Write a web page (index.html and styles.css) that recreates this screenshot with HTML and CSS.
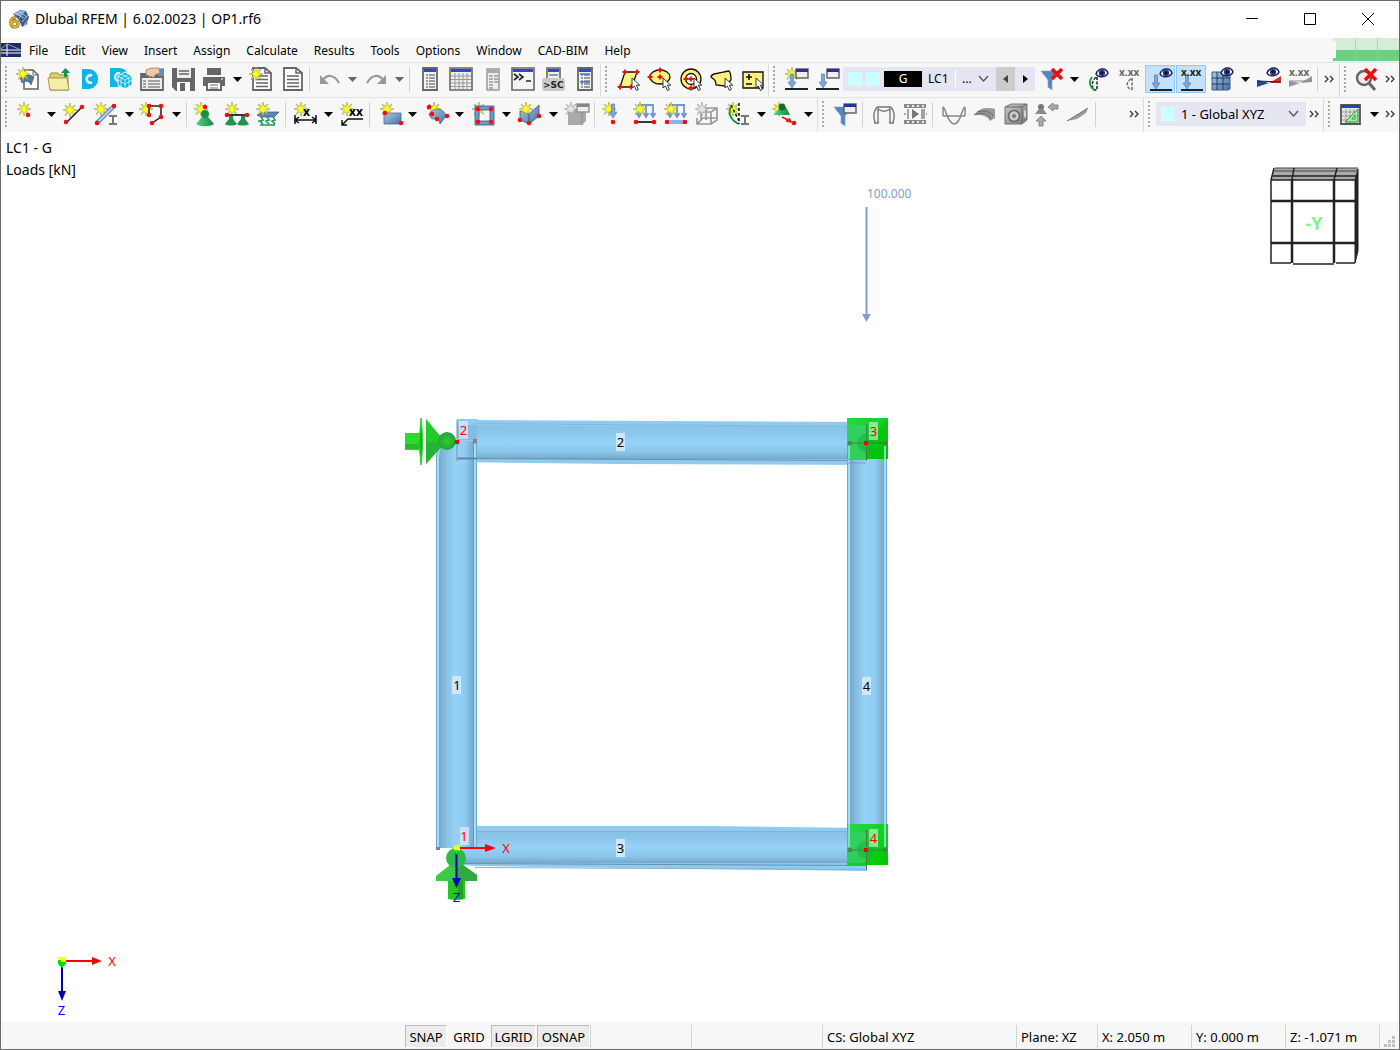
FILE: index.html
```html
<!DOCTYPE html>
<html lang="en">
<head>
<meta charset="utf-8">
<title>Dlubal RFEM | 6.02.0023 | OP1.rf6</title>
<link rel="stylesheet" href="styles.css">
</head>
<body>
<svg class="defs" aria-hidden="true">
  <defs>
    <linearGradient id="blue" x1="0" y1="0" x2="1" y2="1"><stop offset="0" stop-color="#a9c8ea"/><stop offset="1" stop-color="#45729f"/></linearGradient>
    <linearGradient id="green" x1="0" y1="0" x2="1" y2="0"><stop offset="0" stop-color="#56d58a"/><stop offset="1" stop-color="#14853f"/></linearGradient>
    <linearGradient id="grey" x1="0" y1="0" x2="1" y2="1"><stop offset="0" stop-color="#ccc"/><stop offset="1" stop-color="#777"/></linearGradient>
    <linearGradient id="tube-v" x1="0" y1="0" x2="1" y2="0"><stop offset="0" stop-color="#79aece"/><stop offset=".15" stop-color="#86bddf"/><stop offset=".45" stop-color="#95d3f8"/><stop offset=".75" stop-color="#90ccf1"/><stop offset="1" stop-color="#78adcd"/></linearGradient>
    <linearGradient id="tube-h" x1="0" y1="0" x2="0" y2="1"><stop offset="0" stop-color="#88c2e5"/><stop offset=".2" stop-color="#8cc7ec"/><stop offset=".5" stop-color="#95d3f8"/><stop offset=".8" stop-color="#8ac4e8"/><stop offset="1" stop-color="#74a9ca"/></linearGradient>
    <linearGradient id="lime" x1="0" y1="0" x2="1" y2="1"><stop offset="0" stop-color="#26d84a"/><stop offset="1" stop-color="#00c800"/></linearGradient>
    <radialGradient id="ball"><stop offset="0" stop-color="#36c936"/><stop offset="1" stop-color="#1fa53a"/></radialGradient>
    <path id="caret" d="M0 0h9L4.500 5z"/>
    <path id="star" d="M0-7 1.200-2.500 5-5 2.600-1.200 7 0 2.600 1.200 5 5.500 1.200 2.600 0 7-1.200 2.600-5 5.500-2.600 1.200-7 0-2.600-1.200-5-5-1.200-2.500z" fill="#ffff1a" stroke="#99995c" stroke-width=".6"/>
    <path id="star-grey" d="M0-7 1.200-2.500 5-5 2.600-1.200 7 0 2.600 1.200 5 5.500 1.200 2.600 0 7-1.200 2.600-5 5.500-2.600 1.200-7 0-2.600-1.200-5-5-1.200-2.500z" fill="#e4e4e4" stroke="#999" stroke-width=".6"/>
    <circle id="node" r="2.300" fill="#f01010"/>
    <path id="cursor" d="M0 0v10l2.400-2 2 4.500 2-1-2-4.300h3.400z" fill="#fff" stroke="#222" stroke-width=".9"/>
    <path id="plus" d="M-2.500 0h5M0-2.500v5" stroke="#f01010" stroke-width="1.800" fill="none"/>
    <g id="eye"><path d="M-6 1C-4-5 4-6 6 0 4 4.500-4 5-6 1z" fill="#fff" stroke="#222255" stroke-width="1.500"/><circle r="3.200" fill="#2a3a94"/><circle r="1.400" fill="#080820"/></g>
    <g id="mini-window"><path d="M0 0h12v9H0z" fill="#eee" stroke="#666" stroke-width="1.500"/><path d="M0 0h12v3H0z" fill="#26319a"/></g>
    <path id="down" d="M-1.500 0h3v8H4L0 14-4 8h2.500z" fill="#7fa5d8" stroke="#4c74ab" stroke-width=".6"/>
    <g id="support"><path d="M-3 5h6l6 7c-4 3-14 3-18 0z" fill="url(#green)"/><circle cy="2" r="4" fill="#189045"/></g>
    <path id="mini-support" d="M-2 0h4v3l4 5c-2 2-10 2-12 0l4-5z" fill="#1f9250"/>
    <g id="sheet"><path d="M3 1h12l6 5v17H3z" fill="#fff" stroke="#666" stroke-width="1.800"/><path d="M15 1v5h6M6 9h12M6 12.500h12M6 16h12M6 19.500h12" fill="none" stroke="#666" stroke-width="1.500"/></g>
    <g id="panel"><path d="M5 1h14v22H5z" fill="#f2f2f2" stroke="#666" stroke-width="1.800"/><path d="M6 2h12v3H6z" fill="#3543d2"/><path d="M8 8h2m1 0h6M8 11h2m1 0h6M8 14h2m1 0h6M8 17h2m1 0h6M8 20h2m1 0h6" stroke="#444" stroke-width="1.200"/></g>
    <g id="more" fill="none" stroke="#333" stroke-width="1.300"><path d="M0 0l3 3-3 3M5 0l3 3-3 3"/></g>
    <path id="funnel" d="M2 4h18l-7 9v10l-4-3v-7z" fill="#5885bd" stroke="#7ea5d3" stroke-width=".7"/>
    <path id="load-frame" d="M5 3h16M6 3v11m7-11v11m7-11v11M3.500 11l2.500 4 2.500-4m2 0 2.500 4 2.500-4m2 0 2.500 4 2.500-4" fill="none" stroke="#6d97cf" stroke-width="1.800"/>
    <path id="i-beam" d="M0 0h8M4 0v8M0 8h8" fill="none" stroke="#777" stroke-width="2"/>
    <path id="chevron" d="M0 0l4.500 5L9 0" fill="none" stroke="#555" stroke-width="1.300"/>
  </defs>
</svg>

<div class="window">
  <header class="titlebar">
    <svg class="app-icon" viewBox="0 0 20 20"><path d="M4 5 11 1l6 1 3 6-2 7-5 3-3-7z" fill="#3c5f90"/><path d="M4 5l8-4 5 1-7 5z" fill="#8ba9cf"/><path d="M6 4l9 5m-6-7 9 6m-3-5-5 6m9-3-6 7m7-3-5 6" stroke="#c3d4ea" stroke-width=".8"/><path d="M7 9C3 8 1 11 2 15c1 4 7 4 7 0 0-4-5-4-6-1" fill="none" stroke="#8a711c" stroke-width="3.200"/><path d="M7 9C3 8 1 11 2 15c1 4 7 4 7 0 0-4-5-4-6-1" fill="none" stroke="#dcb73d" stroke-width="1.800"/></svg>
    <h1>Dlubal RFEM | 6.02.0023 | OP1.rf6</h1>
    <div class="window-controls">
      <button aria-label="Minimize"><svg viewBox="0 0 12 12"><path d="M0 5.500h12"/></svg></button>
      <button aria-label="Maximize"><svg viewBox="0 0 12 12"><path d="M.5.5h11v11H.5z"/></svg></button>
      <button aria-label="Close"><svg viewBox="0 0 12 12"><path d="M0 0l12 12M12 0 0 12"/></svg></button>
    </div>
  </header>

  <nav class="menubar">
    <svg class="menu-logo" viewBox="0 0 20 14"><path fill="#1f2c66" d="M0 0h20v14H0z"/><path d="M0 7h20M0 10h20M6 1v12" fill="none" stroke="#fff" stroke-width="1"/><path d="M0 6l6-5 12 5" fill="none" stroke="#aeb6d8" stroke-width=".8"/></svg>
    <button>File</button><button>Edit</button><button>View</button><button>Insert</button><button>Assign</button><button>Calculate</button><button>Results</button><button>Tools</button><button>Options</button><button>Window</button><button>CAD-BIM</button><button>Help</button>
    <svg class="monitor" viewBox="0 0 66 24"><path fill="#d3edd8" d="M0 0h66v12H0z"/><path fill="#6fcf80" d="M0 12h66v11H0z"/><path fill="#f7f7f7" d="M0 3h3v17H0z"/><path d="M22.500 0v12M44.500 0v12" stroke="#b4d4bb"/><path d="M22.500 12v11M44.500 12v11" stroke="#84d993"/></svg>
  </nav>

  <div class="toolrow">
    <div class="toolbar" role="toolbar" aria-label="Standard">
      <i class="grip"></i>
      <button class="tool" aria-label="New model"><svg viewBox="0 0 24 24"><path d="M8 3h9l5 5v14H8z" fill="#fff" stroke="#666" stroke-width="1.600"/><path d="M17 3v5h5" fill="none" stroke="#666"/><path d="M4 11c5-4 9-4 14-1l-3 8c-1-4-6-5-9-2z" fill="#4977ad" stroke="#2d557f" stroke-width=".6"/><use href="#star" x="7" y="7"/></svg></button>
      <button class="tool" aria-label="Open"><svg viewBox="0 0 24 24"><path d="M3 8l1-2h7l2 2h8v15H3z" fill="#e0ce72" stroke="#9a8a35"/><path d="M1 11h19l2 12H3z" fill="#f6ecac" stroke="#a89742"/><path d="M17 10V6h-3l4.500-5L23 6h-3v4z" fill="#15924b"/></svg></button>
      <button class="tool" aria-label="Cloud"><svg viewBox="0 0 24 24"><path d="M4 2h7c12 1 12 19 0 20H4z" fill="#0db5e6"/><path d="M14 8.500c-7-2-7 9 0 7" fill="none" stroke="#fff" stroke-width="2.500"/></svg></button>
      <button class="tool" aria-label="Block manager"><svg viewBox="0 0 24 24"><path d="M1 1h9c6 0 9 4 9 9L9 20H1z" fill="#0db5e6"/><path d="M11 6c-6-1-6 8-2 8" fill="none" stroke="#fff" stroke-width="2"/><path d="M16 5l7 4v9l-7 4-7-4V9z" fill="#0db5e6" stroke="#fff"/><path d="M9 9l7 4 7-4m-7 4v9M12 7l8 4v9M20 7l-8 4v9M9 13l7 4 7-4" fill="none" stroke="#c9f1ff" stroke-width=".9"/></svg></button>
      <button class="tool" aria-label="Project manager"><svg viewBox="0 0 24 24"><path d="M1 7h22v16H1z" fill="#eee" stroke="#666" stroke-width="1.800"/><path d="M1 7h22v4H1z" fill="#666"/><path d="M3 14h3m2 0h12M3 17h3m2 0h12M3 20h3m2 0h12" stroke="#555"/><path d="M17 2l7-1v8h-6z" fill="#5d8fc7"/><path d="M6 3l5-2h8l1 5-5 2-1 3-3-2-1 2-2-3-2 1z" fill="#f0c7a4" stroke="#9a6c4a" stroke-width=".7"/></svg></button>
      <button class="tool" aria-label="Save"><svg viewBox="0 0 24 24"><path d="M1 1h23v23H5l-4-4z" fill="#666"/><path d="M6 1h14v10H6z" fill="#eee"/><path d="M8 4h10M8 7h10" stroke="#666" stroke-width="1.500"/><path d="M6 15h13v9H6z" fill="#fff"/><path d="M9 16h5v8H9z" fill="#666"/></svg></button>
      <button class="tool" aria-label="Print"><svg viewBox="0 0 24 24"><path d="M5 1h14v7H5z" fill="#666"/><path d="M1 10h22v9H1z" fill="#666"/><path d="M5 15h14v8H5z" fill="#fff" stroke="#666" stroke-width="2"/><path d="M8 18h8M8 21h8" stroke="#666"/><path d="M19 12h2" stroke="#fff"/></svg></button>
      <button class="drop" aria-label="Print options"><svg viewBox="0 0 9 5"><use href="#caret"/></svg></button>
      <button class="tool" aria-label="New report"><svg viewBox="0 0 24 24"><use href="#sheet" x="1"/><use href="#star" x="7" y="7"/></svg></button>
      <button class="tool" aria-label="Report"><svg viewBox="0 0 24 24"><use href="#sheet" x="1"/></svg></button>
      <i class="sep"></i>
      <button class="tool" aria-label="Undo"><svg viewBox="0 0 24 24"><path d="M5 14c5-7 12-7 17 2" fill="none" stroke="#999" stroke-width="2.200"/><path d="M3 8v9h9z" fill="#999"/></svg></button>
      <button class="drop dim" aria-label="Undo list"><svg viewBox="0 0 9 5"><use href="#caret"/></svg></button>
      <button class="tool" aria-label="Redo"><svg viewBox="0 0 24 24"><path d="M20 14C15 7 8 7 3 16" fill="none" stroke="#999" stroke-width="2.200"/><path d="M22 8v9h-9z" fill="#999"/></svg></button>
      <button class="drop dim" aria-label="Redo list"><svg viewBox="0 0 9 5"><use href="#caret"/></svg></button>
      <i class="sep"></i>
      <button class="tool" aria-label="Navigator"><svg viewBox="0 0 24 24"><use href="#panel" x="1"/></svg></button>
      <button class="tool" aria-label="Tables"><svg viewBox="0 0 24 24"><path d="M2 1h22v22H2z" fill="#eee" stroke="#666" stroke-width="1.600"/><path d="M3 2h20v3H3z" fill="#3543d2"/><path d="M3 9h20M3 12.500h20M3 16h20M3 19.500h20M7 6v16m4-16v16m4-16v16m4-16v16" stroke="#999"/></svg></button>
      <button class="tool" aria-label="Control panel"><svg viewBox="0 0 24 24"><path d="M8 2h12v21H8z" fill="#eee" stroke="#999" stroke-width="1.500"/><path d="M8 3h12v3H8z" fill="#aaa"/><path d="M10 9h4m1 0h4M10 12h4m1 0h4M10 15h4m1 0h4M10 18h4m-4 3h4" stroke="#999" stroke-width="1.400"/></svg></button>
      <button class="tool" aria-label="Console"><svg viewBox="0 0 24 24"><path d="M2 1h22v22H2z" fill="#f4f4f4" stroke="#666" stroke-width="1.600"/><path d="M3 2h20v3H3z" fill="#3543d2"/><path d="M4 7l4 3-4 3m5-6 4 3-4 3m7 1h5" fill="none" stroke="#222" stroke-width="1.600"/></svg></button>
      <button class="tool" aria-label="Scripts"><svg viewBox="0 0 24 24"><path d="M6 1h13v13H6z" fill="#eee" stroke="#666" stroke-width="1.600"/><path d="M7 2h11v3H7z" fill="#3543d2"/><path d="M8 8h9" stroke="#444"/><rect x="1" y="11" width="23" height="13" rx="3" fill="#c9c9c9"/><text x="2" y="21" class="ico-script">&gt;SC</text></svg></button>
      <button class="tool" aria-label="Details panel"><svg viewBox="0 0 24 24"><use href="#panel" x="1"/><path d="M8 7h10M8 15h10" stroke="#3c70d6" stroke-width="1.500"/></svg></button>
    </div>

    <div class="toolbar" role="toolbar" aria-label="Selection">
      <i class="grip"></i>
      <button class="tool" aria-label="Select by rhombus"><svg viewBox="0 0 24 24"><path d="M9 5h12l-5 15H4z" fill="#fbf37c" stroke="#111" stroke-width="1.300"/><use href="#plus" x="9" y="5"/><use href="#plus" x="21" y="5"/><use href="#plus" x="4" y="20"/><use href="#plus" x="15" y="20"/><use href="#cursor" x="16" y="11"/></svg></button>
      <button class="tool" aria-label="Select by ellipse"><svg viewBox="0 0 24 24"><ellipse cx="13" cy="10" rx="10" ry="7" fill="#fbf37c" stroke="#111" stroke-width="1.300"/><use href="#plus" x="13" y="3"/><use href="#plus" x="3" y="10"/><use href="#plus" x="13" y="10"/><use href="#cursor" x="16" y="11"/></svg></button>
      <button class="tool" aria-label="Select by ring"><svg viewBox="0 0 24 24"><circle cx="13" cy="12" r="10" fill="#fbf37c" stroke="#111" stroke-width="1.300"/><circle cx="13" cy="12" r="5.500" fill="#fff" stroke="#111" stroke-width="1.300"/><use href="#plus" x="13" y="12"/><use href="#plus" x="8" y="12"/><use href="#plus" x="13" y="21"/><use href="#cursor" x="16" y="11"/></svg></button>
      <button class="tool" aria-label="Select by polygon"><svg viewBox="0 0 24 24"><path d="M2 10c0-4 9-4 18-6 2 2 2 5 2 9l-6 6-9-1c0-4-1-5-5-8z" fill="#fbf37c" stroke="#111" stroke-width="1.300"/><use href="#cursor" x="16" y="11"/></svg></button>
      <button class="tool" aria-label="Special selection"><svg viewBox="0 0 24 24"><path d="M3 5h20v16H3z" fill="#fbf37c" stroke="#111" stroke-width="1.300"/><path d="M6 10h6M9 7v6m-3 4h6" stroke="#111" stroke-width="1.600"/><use href="#cursor" x="16" y="11"/></svg></button>
    </div>

    <div class="toolbar grow" role="toolbar" aria-label="Load cases">
      <i class="grip"></i>
      <button class="tool" aria-label="New load case"><svg viewBox="0 0 24 24"><path d="M1 22h23" stroke="#222" stroke-width="2"/><use href="#star" x="8" y="7"/><use href="#down" x="8" y="7"/><use href="#mini-window" x="12" y="2"/></svg></button>
      <button class="tool" aria-label="Edit load case"><svg viewBox="0 0 24 24"><path d="M1 22h23" stroke="#222" stroke-width="2"/><use href="#down" x="8" y="7"/><use href="#mini-window" x="12" y="2"/></svg></button>
      <div class="case-box">
        <i class="swatch"></i><i class="swatch"></i><span class="case-type">G</span>
        <select class="case-select" aria-label="Load case"><option>LC1</option></select>
        <span class="pick case-name"><select aria-label="Load case name"><option>...</option></select><svg viewBox="0 0 9 6"><use href="#chevron"/></svg></span>
        <button class="step prev" aria-label="Previous"><svg viewBox="0 0 5 8"><path d="M5 0v8L0 4z"/></svg></button>
        <button class="step" aria-label="Next"><svg viewBox="0 0 5 8"><path d="M0 0v8l5-4z"/></svg></button>
      </div>
      <button class="tool" aria-label="Clear filter"><svg viewBox="0 0 24 24"><use href="#funnel"/><path d="M13 2l10 10m0-10L13 12" stroke="#e81010" stroke-width="3.600"/></svg></button>
      <button class="drop" aria-label="Filter options"><svg viewBox="0 0 9 5"><use href="#caret"/></svg></button>
      <button class="tool" aria-label="Show deformation"><svg viewBox="0 0 24 24"><path d="M11 10v13H8c-3-4-2-9 2-13" fill="none" stroke="#222" stroke-width="1.500" stroke-dasharray="3 1.500"/><path d="M6 10c-4 5-2 11 3 13" fill="none" stroke="#1d9c4c" stroke-width="1.800"/><use href="#eye" x="16" y="6"/></svg></button>
      <button class="tool" aria-label="Deformation values"><svg viewBox="0 0 24 24"><text x="2" y="9" class="ico-values dim-text">x.xx</text><path d="M15 11v12M14 12c-5 3-5 8 0 11" fill="none" stroke="#666" stroke-width="1.400" stroke-dasharray="3 1.500"/></svg></button>
      <button class="tool on" aria-label="Show loads" aria-pressed="true"><svg viewBox="0 0 24 24"><path d="M2 23h22" stroke="#222" stroke-width="2"/><use href="#down" x="8" y="8"/><use href="#eye" x="18" y="6"/></svg></button>
      <button class="tool on" aria-label="Load values" aria-pressed="true"><svg viewBox="0 0 24 24"><path d="M2 23h22" stroke="#222" stroke-width="2"/><use href="#down" x="8" y="8"/><text x="2" y="9" class="ico-values">x.xx</text></svg></button>
      <button class="tool" aria-label="Show results"><svg viewBox="0 0 24 24"><path d="M2 5h18v17l-2 1H2z" fill="url(#blue)" stroke="#355d88"/><path d="M7 5v18m6-18v18M2 11h18M2 17h18" stroke="#213d63"/><use href="#eye" x="17" y="5"/></svg></button>
      <button class="drop" aria-label="Results options"><svg viewBox="0 0 9 5"><use href="#caret"/></svg></button>
      <button class="tool" aria-label="Show diagrams"><svg viewBox="0 0 24 24"><path d="M0 13v7l12-4z" fill="#26469b"/><path d="M12 16l12-7v7z" fill="#cf3422"/><path d="M0 14l24 1" stroke="#222"/><use href="#eye" x="16" y="5"/></svg></button>
      <button class="tool" aria-label="Diagram values"><svg viewBox="0 0 24 24"><path d="M1 14v6l11-4 12-7v6l-12 1z" fill="#999"/><path d="M1 14h23" stroke="#888"/><text x="1" y="9" class="ico-values dim-text">x.xx</text></svg></button>
      <i class="sep"></i>
      <button class="drop" aria-label="More"><svg class="more" viewBox="0 0 9 7"><use href="#more"/></svg></button>
    </div>

    <div class="toolbar" role="toolbar" aria-label="View">
      <i class="grip"></i>
      <button class="tool" aria-label="Cancel zoom"><svg viewBox="0 0 24 24"><circle cx="9" cy="11" r="7" fill="#eee" stroke="#666" stroke-width="2.500"/><path d="M14 16l6 7" stroke="#666" stroke-width="3"/><path d="M10 2l11 11m0-11L10 13" stroke="#e81010" stroke-width="3.600"/></svg></button>
      <button class="drop" aria-label="More"><svg class="more" viewBox="0 0 9 7"><use href="#more"/></svg></button>
    </div>
  </div>

  <div class="toolrow">
    <div class="toolbar" role="toolbar" aria-label="Insert">
      <i class="grip"></i>
      <button class="tool" aria-label="New node"><svg viewBox="0 0 24 24"><use href="#star" x="8" y="7"/><use href="#node" x="12" y="13"/></svg></button>
      <button class="drop" aria-label="Node options"><svg viewBox="0 0 9 5"><use href="#caret"/></svg></button>
      <button class="tool" aria-label="New line"><svg viewBox="0 0 24 24"><use href="#star" x="7" y="8"/><path d="M4 20 19 5" stroke="#222" stroke-width="1.600"/><use href="#node" x="3" y="20"/><use href="#node" x="19" y="5"/></svg></button>
      <button class="tool" aria-label="New member"><svg viewBox="0 0 24 24"><use href="#star" x="7" y="7"/><path d="M3 21 20 4" stroke="#4c75ad" stroke-width="4"/><path d="M3 21 20 4" stroke="#b4cdee" stroke-width="2.400"/><use href="#node" x="3" y="21"/><use href="#node" x="20" y="4"/><use href="#i-beam" x="15" y="14"/></svg></button>
      <button class="drop" aria-label="Member options"><svg viewBox="0 0 9 5"><use href="#caret"/></svg></button>
      <button class="tool" aria-label="New polyline"><svg viewBox="0 0 24 24"><use href="#star" x="5" y="7"/><path d="M8 13V4h12v11l-9 6" fill="none" stroke="#222" stroke-width="1.500"/><use href="#node" x="8" y="13"/><use href="#node" x="8" y="4"/><use href="#node" x="20" y="4"/><use href="#node" x="20" y="15"/><use href="#node" x="11" y="21"/></svg></button>
      <button class="drop" aria-label="Polyline options"><svg viewBox="0 0 9 5"><use href="#caret"/></svg></button>
      <i class="sep"></i>
      <button class="tool" aria-label="Nodal support"><svg viewBox="0 0 24 24"><use href="#star" x="7" y="7"/><use href="#node" x="11" y="5"/><use href="#support" x="11" y="10"/></svg></button>
      <button class="tool" aria-label="Line support"><svg viewBox="0 0 24 24"><use href="#star" x="7" y="7"/><path d="M2 13h20" stroke="#222" stroke-width="1.800"/><use href="#mini-support" x="6" y="14"/><use href="#mini-support" x="18" y="14"/><use href="#node" x="2" y="13"/><use href="#node" x="22" y="13"/></svg></button>
      <button class="tool" aria-label="Surface support"><svg viewBox="0 0 24 24"><path d="M1 13l6-3h16l-5 5H5z" fill="#5b87bd" stroke="#35577f" stroke-width=".7"/><path d="M5 15l2 3-3 1 3 3m4-7 2 3-3 1 3 3m4-7 2 3-3 1 3 3M2 19h4m-2 4h15" fill="none" stroke="#25975a" stroke-width="1.600"/><use href="#star" x="7" y="7"/></svg></button>
      <i class="sep"></i>
      <button class="tool" aria-label="Dimension"><svg viewBox="0 0 24 24"><use href="#star" x="8" y="7"/><path d="M2 13v9M23 13v9M3 18h19M6 15l-4 3 4 3m13-6 4 3-4 3" fill="none" stroke="#111" stroke-width="1.500"/><text x="10" y="14" class="ico-dim">x</text></svg></button>
      <button class="drop" aria-label="Dimension options"><svg viewBox="0 0 9 5"><use href="#caret"/></svg></button>
      <button class="tool" aria-label="Comment"><svg viewBox="0 0 24 24"><use href="#star" x="7" y="7"/><text x="9" y="14" class="ico-dim">xx</text><path d="M23 17H8l-6 6m0-5v5h5" fill="none" stroke="#111" stroke-width="1.500"/></svg></button>
      <i class="sep"></i>
      <button class="tool" aria-label="New surface"><svg viewBox="0 0 24 24"><path d="M7 11h17v11H7z" fill="url(#blue)" stroke="#476d98" stroke-width=".8"/><use href="#star" x="10" y="7"/><use href="#node" x="8" y="11"/><use href="#node" x="24" y="21"/></svg></button>
      <button class="drop" aria-label="Surface options"><svg viewBox="0 0 9 5"><use href="#caret"/></svg></button>
      <button class="tool" aria-label="Curved surface"><svg viewBox="0 0 24 24"><use href="#star" x="10" y="7"/><path d="M5 13C9 4 20 6 22 14l-6 8c0-3-3-6-8-5z" fill="url(#blue)" stroke="#476d98" stroke-width=".8"/><use href="#node" x="5" y="5"/><use href="#node" x="8" y="12"/><use href="#node" x="23" y="14"/><use href="#node" x="13" y="17"/></svg></button>
      <button class="drop" aria-label="Curved surface options"><svg viewBox="0 0 9 5"><use href="#caret"/></svg></button>
      <button class="tool" aria-label="New opening"><svg viewBox="0 0 24 24"><use href="#star" x="8" y="7"/><path d="M4 4h19v19H4zm4 4v11h11V8z" fill="#6e9bd0" stroke="#35577f" fill-rule="evenodd" stroke-width=".8"/><use href="#node" x="7" y="7"/><use href="#node" x="20" y="7"/><use href="#node" x="7" y="20"/><use href="#node" x="20" y="20"/></svg></button>
      <button class="drop" aria-label="Opening options"><svg viewBox="0 0 9 5"><use href="#caret"/></svg></button>
      <button class="tool" aria-label="New solid"><svg viewBox="0 0 24 24"><path d="M2 9l9 3 10-9v11l-10 8-9-4z" fill="url(#blue)" stroke="#35577f" stroke-width=".8"/><path d="M11 12v9" stroke="#35577f"/><use href="#star" x="8" y="7"/><use href="#node" x="2" y="18"/><use href="#node" x="11" y="21"/><use href="#node" x="21" y="14"/></svg></button>
      <button class="drop" aria-label="Solid options"><svg viewBox="0 0 9 5"><use href="#caret"/></svg></button>
      <button class="tool" aria-label="Block"><svg viewBox="0 0 24 24"><path d="M3 10l4-3h14v12l-4 4H3z" fill="#aaa"/><path d="M3 10h14v13" fill="none" stroke="#888"/><use href="#star-grey" x="6" y="7"/><path d="M12 2h12v8H12z" fill="#eee" stroke="#999" stroke-width="1.500"/><path d="M12 2h12v3H12z" fill="#888"/></svg></button>
      <i class="sep"></i>
      <button class="tool" aria-label="Nodal load"><svg viewBox="0 0 24 24"><use href="#star" x="7" y="7"/><use href="#down" x="11" y="2"/><use href="#node" x="11" y="20"/></svg></button>
      <button class="tool" aria-label="Line load"><svg viewBox="0 0 24 24"><use href="#load-frame"/><use href="#star" x="7" y="7"/><path d="M3 20h18" stroke="#222" stroke-width="1.800"/><use href="#node" x="3" y="20"/><use href="#node" x="21" y="20"/></svg></button>
      <button class="tool" aria-label="Member load"><svg viewBox="0 0 24 24"><use href="#load-frame"/><use href="#star" x="7" y="7"/><path d="M3 20h18" stroke="#8db1e3" stroke-width="4"/><use href="#node" x="3" y="20"/><use href="#node" x="21" y="20"/></svg></button>
      <button class="tool" aria-label="Surface load"><svg viewBox="0 0 24 24"><path d="M6 6h16v12l-6 4H2v-6M6 10h10l6-4M16 10v12M6 6v12m5-12v12M2 22l6-6h14" fill="none" stroke="#999" stroke-width="1.700"/><use href="#star-grey" x="7" y="7"/></svg></button>
      <button class="tool" aria-label="Imperfection"><svg viewBox="0 0 24 24"><use href="#star" x="7" y="7"/><path d="M5 5c-4 7 1 14 8 17" fill="none" stroke="#179447" stroke-width="1.800"/><path d="M13 1v21M5 3l8 16" fill="none" stroke="#111" stroke-width="1.500" stroke-dasharray="3 2"/><use href="#i-beam" x="15" y="14"/></svg></button>
      <button class="drop" aria-label="Imperfection options"><svg viewBox="0 0 9 5"><use href="#caret"/></svg></button>
      <button class="tool" aria-label="Support displacement"><svg viewBox="0 0 24 24"><use href="#star" x="6" y="7"/><path d="M7 5h6l4 8H1z" fill="url(#green)"/><circle cx="9" cy="5" r="3.500" fill="#126b37"/><path d="M9 15l8 4m-4 0 5 1-2-4" fill="none" stroke="#e01818" stroke-width="1.600"/><use href="#node" x="21" y="21"/></svg></button>
      <button class="drop" aria-label="Displacement options"><svg viewBox="0 0 9 5"><use href="#caret"/></svg></button>
    </div>

    <div class="toolbar grow results" role="toolbar" aria-label="Results">
      <i class="grip"></i>
      <button class="tool" aria-label="Result filter"><svg viewBox="0 0 24 24"><use href="#funnel" x="-1" y="1"/><use href="#mini-window" x="11" y="2"/></svg></button>
      <i class="sep"></i>
      <button class="tool" aria-label="Deformations"><svg viewBox="0 0 24 24"><path d="M6 6v15m12-15v15M5 5h14M6 7c4 3 8 3 12 0M5 5c-4 5-4 10-2 16M19 5c4 5 4 10 2 16M2 21h5m10 0h5" fill="none" stroke="#777" stroke-width="1.400"/></svg></button>
      <button class="tool" aria-label="Animation"><svg viewBox="0 0 24 24"><path d="M1 2h22v4H1zm0 16h22v4H1z" fill="#888"/><path d="M4 4h2m3 0h2m3 0h2m3 0h2M4 20h2m3 0h2m3 0h2m3 0h2" stroke="#eee" stroke-width="2"/><path d="M5 7v10m14-10v10M1 12h2m18-5v10m2-5h1" stroke="#888" stroke-width="1.500"/><path d="M9 7v10l7-5z" fill="#777"/></svg></button>
      <i class="sep"></i>
      <button class="tool" aria-label="Members"><svg viewBox="0 0 24 24"><path d="M1 5v9m22-9v9M1 14h22M1 5c2 0 3 9 7 14 3 4 6 4 9-1 3-6 4-13 6-13" fill="none" stroke="#888" stroke-width="1.500"/></svg></button>
      <button class="tool" aria-label="Surfaces"><svg viewBox="0 0 24 24"><path d="M1 13C7 5 15 5 22 7v9l-5 3C14 13 8 13 1 13z" fill="#999"/><path d="M1 13c8-3 14-2 17 4M4 10c7-2 13-1 16 4" fill="none" stroke="#666"/></svg></button>
      <button class="tool" aria-label="Solids"><svg viewBox="0 0 24 24"><path d="M1 5l6-3h16v16l-5 4H1z" fill="url(#grey)" stroke="#777"/><path d="M1 5h17l5-3M18 5v17" fill="none" stroke="#666"/><circle cx="10" cy="14" r="5.500" fill="#ccc" stroke="#666" stroke-width="1.500"/><circle cx="10" cy="14" r="2" fill="#777"/><ellipse cx="21" cy="12" rx="1" ry="4" fill="#ddd"/></svg></button>
      <button class="tool" aria-label="Reactions"><svg viewBox="0 0 24 24"><circle cx="6" cy="5" r="3" fill="#777"/><path d="M4 7h4l4 5H0z" fill="#888"/><path d="M13 5l5-4v2h5v4h-5v2zM6 14l5 5H8v5H4v-5H1z" fill="#aaa" stroke="#777" stroke-width=".8"/></svg></button>
      <button class="tool" aria-label="Result sections"><svg viewBox="0 0 24 24"><path d="M1 19 22 6l-2 5-9 6z" fill="#999"/><path d="M1 19 22 6" stroke="#777"/></svg></button>
      <i class="sep"></i>
      <button class="drop last" aria-label="More"><svg class="more" viewBox="0 0 9 7"><use href="#more"/></svg></button>
    </div>

    <div class="toolbar" role="toolbar" aria-label="Coordinate systems">
      <i class="grip"></i>
      <div class="cs-box">
        <i class="swatch"></i>
        <span class="pick"><select aria-label="Coordinate system"><option>1 - Global XYZ</option></select><svg viewBox="0 0 9 6"><use href="#chevron"/></svg></span>
      </div>
      <button class="drop" aria-label="More"><svg class="more" viewBox="0 0 9 7"><use href="#more"/></svg></button>
    </div>

    <div class="toolbar" role="toolbar" aria-label="Work plane">
      <i class="grip"></i>
      <button class="tool" aria-label="Work plane"><svg viewBox="0 0 24 24"><path d="M2 3h19v19H2z" fill="#e8e8e8" stroke="#555" stroke-width="1.800"/><path d="M2 3h19v3H2z" fill="#2944a3"/><path d="M3 10h17M3 14h17M3 18h17M7 7v14m4-14v14m4-14v14" stroke="#999"/><path d="M6 20 19 7v13z" fill="#a4eaa0" stroke="#2c9a3c"/><path d="M13 17l3-4v4z" fill="#fff" stroke="#2c9a3c"/></svg></button>
      <button class="drop" aria-label="Work plane options"><svg viewBox="0 0 9 5"><use href="#caret"/></svg></button>
      <button class="drop" aria-label="More"><svg class="more" viewBox="0 0 9 7"><use href="#more"/></svg></button>
    </div>
  </div>

  <main class="viewport">
    <p class="legend">LC1 - G<br>Loads [kN]</p>

    <svg class="model" viewBox="1 132 1398 890" role="img" aria-label="Frame model with nodal load">
      <!-- nodal load -->
      <path d="M866.500 207v108" stroke="#829dc8" stroke-width="2"/><path d="M862 314h9l-4.500 8z" fill="#829dc8"/>
      <text x="867" y="198" class="load">100.000</text>

      <!-- member 2 -->
      <path d="M457 419l23 1 387 2v43l-250-1-160-2z" fill="#8fcbf0"/>
      <path d="M457 426h410v33H457z" fill="url(#tube-h)"/>
      <path d="M457 423.500l410 3" stroke="#7dbbe0" fill="none"/><path d="M457 458.500l410 2" stroke="#6590ab" fill="none"/>
      <!-- member 3 -->
      <path d="M457 826l250 0 160 2v43l-80-1-310-4-20-1z" fill="#8fcbf0"/>
      <path d="M457 832h410v31H457z" fill="url(#tube-h)"/>
      <path d="M457 831.500h410" stroke="#78b7dc"/><path d="M457 863.500l410 2" stroke="#6590ab"/><path d="M475 867.500l390 2" stroke="#80b6d5"/>
      <!-- member 1 -->
      <path d="M436 441h41v407h-41z" fill="#91cdf2"/><path d="M440 441h33v407h-33z" fill="url(#tube-v)"/>
      <path d="M436.500 455v393M439.500 455v393M476.500 441v407" stroke="#6fa9cc"/><path d="M473.500 441v407" stroke="#5f9dc5"/>
      <path d="M438 455v393M475 441v407" stroke="#a5dcfb" stroke-width="2"/>
      <path d="M457 420h20v20h-20z" fill="#84bce0"/><path d="M457 419h20v6h-20z" fill="#8fcbf0"/><path d="M457 458.500h20" stroke="#5d88a6" stroke-width="2"/>
      <!-- fixed supports at nodes 3 and 4 -->
      <path d="M847 418h41v41h-41z" fill="url(#lime)"/><path d="M847 425h19v34h-19z" fill="#3ccf72" opacity=".7"/><path d="M866 443l22-25v41h-22z" fill="#00b900" opacity=".4"/>
      <path d="M847 824h41v41h-41z" fill="url(#lime)"/><path d="M847 832h19v31h-19z" fill="#3ccf72" opacity=".7"/>
      <!-- member 4 -->
      <path d="M847 459h40v365h-40z" fill="#91cdf2"/><path d="M851 459h32v365h-32z" fill="url(#tube-v)"/>
      <path d="M847.500 459v365M850.500 459v365M886.500 459v365M883.500 459v365" stroke="#73add0"/>
      <path d="M849 459v365M885 459v365" stroke="#a5dcfb" stroke-width="2"/>
      <path d="M847 459.500h20M847 463h19" stroke="#6f9fbd"/>
      <path d="M473 444v-5h4v4M436 847h4v3h-4z" fill="#8a7e91"/>
      <path d="M457 420v41" stroke="#7195ad"/>
      <path d="M847 443h40M866.500 424v37M847 850h40M866.500 830v40" stroke="#50634b" opacity=".8"/>
      <circle cx="866" cy="443" r="9" fill="#17ae38" opacity=".5"/><circle cx="866" cy="850" r="9" fill="#17ae38" opacity=".5"/>
      <path d="M849 446v13M885 446v13M849 824v23M885 824v23" stroke="#7ce0c0" stroke-width="2"/>
      <path d="M848 441h4v4h-4zM883 441h4v4h-4zM848 848h4v4h-4zM883 848h4v4h-4z" fill="#50804b" opacity=".8"/>

      <!-- support at node 2 -->
      <path d="M405 433h17v17h-17z" fill="#2cd92c"/><path d="M405 444h17v5h-17z" fill="#25bd25"/>
      <path d="M421 418c2 14 2 32 0 47l-2-22z" fill="#18b318" stroke="#27d527"/>
      <path d="M426 419l16 19v8l-16 18z" fill="#22ca2a"/><path d="M426 442h16v4l-16 18z" fill="#23b635"/><circle cx="447" cy="441" r="9" fill="url(#ball)"/>
      <!-- support at node 1 -->
      <path d="M448 875h17v24q-8 2-17 0z" fill="#26c526"/><path d="M458 875h5v24h-5z" fill="#1aa41a"/>
      <path d="M436 881v-5l14-11h13l14 10v6z" fill="#3cca42"/><path d="M457 865h6l14 10v6h-20z" fill="#32a93f"/>
      <circle cx="456" cy="858" r="10" fill="#31b84a"/>

      <g fill="#fff" opacity=".5"><path d="M459 421h9v18h-9zM869 422h9v18h-9zM460 827h9v18h-9zM869 829h9v18h-9z"/></g>
      <g fill="#cde8fa"><path d="M616 433h9v18h-9zM616 839h9v18h-9zM452 676h9v18h-9zM862 677h9v18h-9z"/></g>
      <g class="node-no"><text x="463.500" y="435">2</text><text x="873.500" y="436">3</text><text x="464" y="841">1</text><text x="873.500" y="843">4</text></g>
      <g class="member-no"><text x="620.500" y="447">2</text><text x="620.500" y="853">3</text><text x="457" y="690">1</text><text x="866.500" y="691">4</text></g>
      <path d="M455 440h4v4h-4zM864 441h4v4h-4zM864 848h4v4h-4z" fill="#f00"/>

      <!-- origin axes -->
      <path d="M457 848h31" stroke="#f00" stroke-width="2"/><path d="M485 844l11 4-11 4z" fill="#f00"/>
      <path d="M456.500 850v31" stroke="#00b" stroke-width="2"/><path d="M452 878h9l-4.500 10z" fill="#00b"/>
      <path d="M454 845h6v6h-6z" fill="#ff0"/><path d="M454 850h5l-2.500 5z" fill="#0e0"/>
      <text x="506" y="853" class="axis-x">X</text><text x="456.500" y="902" class="axis-z">Z</text>
    </svg>

    <svg class="cube" viewBox="0 0 90 100" role="img" aria-label="View cube">
      <path d="M5 1h83l-3 12H1z" fill="#aaa"/><path d="M1 13h84v83H1z" fill="#fff"/>
      <path d="M88 2v82l-3 12V13z" fill="#222" stroke="#222"/>
      <path d="M5 1h83M4 4h84" fill="none" stroke="#444" stroke-width="1"/>
      <path d="M3 9h83M1 13h84M4 1 1 13v83h20m2 1h41m2-1h19M24 1l-2 12M67 1l-3 12" fill="none" stroke="#222" stroke-width="1.500"/>
      <path d="M22 12v84M64 12v84M1 34h84M1 76h84" fill="none" stroke="#222" stroke-width="2.500"/>
      <text x="44" y="63" class="cube-face">-Y</text>
    </svg>

    <svg class="triad" viewBox="0 0 70 64" role="img" aria-label="Axis directions">
      <path d="M10 8h31" stroke="#f00" stroke-width="2"/><path d="M40 4l10 4-10 4z" fill="#f00"/>
      <path d="M10 10v30" stroke="#00b" stroke-width="2"/><path d="M6 38h8l-4 10z" fill="#00b"/>
      <path d="M6 4h8v6H6z" fill="#ff0"/><path d="M6 7h8v4l-4 4-4-4z" fill="#0d0"/><path d="M8 4h6v5H9z" fill="#ff0"/>
      <text x="60" y="13" class="axis-x">X</text><text x="9.500" y="62" class="axis-z">Z</text>
    </svg>
  </main>

  <footer class="statusbar">
    <div class="toggles">
      <button class="snap" aria-pressed="true">SNAP</button><button class="grid" aria-pressed="false">GRID</button><button class="lgrid" aria-pressed="true">LGRID</button><button class="osnap" aria-pressed="true">OSNAP</button>
    </div>
    <span class="cell w-message"></span>
    <span class="cell w-progress"></span>
    <span class="cell w-system">CS: Global XYZ</span>
    <span class="cell w-plane">Plane: XZ</span>
    <span class="cell w-coord">X: 2.050 m</span>
    <span class="cell w-coord">Y: 0.000 m</span>
    <span class="cell w-coord">Z: -1.071 m</span>
    <span class="cell w-grip"><svg viewBox="0 0 12 12"><path d="M8 0h3v3H8zM4 4h3v3H4zM8 4h3v3H8zM0 8h3v3H0zM4 8h3v3H4zM8 8h3v3H8z" fill="#c0c0c0"/></svg></span>
  </footer>
</div>
</body>
</html>
```
FILE: styles.css
```css
* { box-sizing: border-box; }
body { margin: 0; font-family: "Noto Sans", "Open Sans", sans-serif; font-size: 12px; line-height: 16px; color: #000; background: #fff; }
button, select { font: inherit; color: inherit; border: 0; margin: 0; padding: 0; background: none; border-radius: 0; }
select { appearance: none; }
svg { display: block; overflow: visible; }
.defs { position: absolute; width: 0; height: 0; }

.window { display: flex; flex-direction: column; min-height: 100vh; border: 1px solid #6b6b6b; }

.titlebar { display: flex; align-items: center; height: 37px; padding: 0 2px 2px 8px; background: #fff; }
.app-icon { width: 20px; height: 20px; }
.titlebar h1 { flex: 1; margin: 0 0 0 6px; font-size: 14px; line-height: 20px; font-weight: 400; }
.window-controls { display: flex; }
.window-controls button { display: grid; place-items: center; width: 58px; height: 34px; }
.window-controls svg { width: 12px; height: 12px; fill: none; stroke: #000; }

.menubar { display: flex; align-items: center; height: 24px; background: #f7f7f7; }
.menu-logo { width: 20px; height: 14px; }
.menubar button { padding: 2px 8px 0; }
.monitor { width: 66px; height: 24px; margin-left: auto; }

.toolrow { display: flex; height: 35px; background: #f7f7f7; border-top: 1px solid #e3e3e3; }
.toolbar { display: flex; align-items: center; gap: 1px; padding: 0 1px 2px 0; border-left: 1px solid #dcdcdc; }
.toolbar:first-child { border-left: 0; }
.grow { flex: 1; }
.grip { width: 11px; height: 26px; background: radial-gradient(circle at 5px 1px, #aaa 1px, transparent 1px) 0 0 / 11px 4px; }
.sep { width: 5px; height: 25px; background: linear-gradient(#d2d2d2, #d2d2d2) 1px 0 / 1px 100% no-repeat; }
.results .sep { width: 7px; }
.tool { display: grid; place-items: center; width: 30px; height: 28px; }
.tool svg { width: 24px; height: 24px; }
.tool.on { background: #c5e1f8; border: 1px solid #90c8f6; }
.drop { display: grid; place-items: center; width: 15px; height: 28px; }
.drop svg { width: 9px; height: 5px; }
.drop .more { width: 9px; height: 7px; }
.dim { fill: #666; }
.last { margin-left: auto; }

.swatch { width: 14px; height: 14px; background: #ccffff; }
.case-box, .cs-box { display: flex; align-items: center; height: 24px; background: #e6e6f2; }
.case-box { width: 192px; padding-left: 5px; gap: 4px; }
.case-type { width: 38px; height: 16px; background: #000; color: #fff; text-align: center; }
.case-select { flex: 1; padding-left: 2px; height: 18px; border-right: 1px solid #fff; }
.pick { display: grid; align-items: center; grid-template-columns: 1fr 17px; }
.pick select { grid-area: 1 / 1 / 2 / 3; height: 24px; }
.pick svg { grid-area: 1 / 2; width: 9px; height: 6px; pointer-events: none; }
.case-name { width: 32px; }
.case-name svg { margin-left: 4px; }
.case-name select { padding-left: 2px; }
.step { display: grid; place-items: center; width: 20px; height: 24px; margin-left: -4px; }
.step svg { width: 5px; height: 8px; }
.step.prev { margin-left: 0; width: 19px; background: #ccc; fill: #444; }
.cs-box { width: 150px; padding-left: 5px; font-size: 13px; }
.cs-box .pick { flex: 1; }
.cs-box select { padding-left: 6px; }

.ico-values { font: 700 10px "Open Sans", sans-serif; fill: #222; }
.ico-values.dim-text { fill: #666; }
.ico-script { font: 700 9px "DejaVu Sans", sans-serif; fill: #222; }
.ico-dim { font: 700 12px "Open Sans", sans-serif; }

.viewport { position: relative; flex: 1; display: flex; background: #fff; }
.model { flex: 1; width: 100%; min-height: 600px; }
.legend { position: absolute; left: 5px; top: 5px; margin: 0; font-size: 14px; line-height: 22px; }
.cube { position: absolute; right: 39px; top: 35px; width: 90px; height: 100px; }
.triad { position: absolute; left: 51px; bottom: 5px; width: 70px; height: 64px; }
.load { font-size: 12px; fill: #829dc8; }
.node-no, .member-no, .axis-x, .axis-z { font-size: 13px; text-anchor: middle; }
.node-no, .axis-x { fill: #f00; }
.axis-z { fill: #00f; }
.cube-face { font-size: 18px; font-weight: 700; text-anchor: middle; fill: #7cf58a; }

.statusbar { display: flex; align-items: center; justify-content: flex-end; height: 27px; padding-top: 1px; font-size: 13px; background: #f7f7f7; }
.toggles { display: flex; gap: 1px; }
.toggles button { height: 23px; padding-top: 1px; border: 1px solid transparent; }
.toggles [aria-pressed="true"] { background: #ececec; border-color: #bbb #fff #fff #bbb; }
.snap, .grid { width: 42px; }
.lgrid { width: 45px; }
.osnap { width: 53px; }
.cell { display: flex; align-items: center; height: 23px; padding: 1px 0 0 4px; border-left: 1px solid #d4d4d4; white-space: nowrap; }
.w-message { width: 101px; }
.w-progress { width: 131px; }
.w-system { width: 194px; }
.w-plane { width: 81px; }
.w-coord { width: 94px; }
.w-grip { width: 20px; align-items: flex-end; }
.w-grip svg { width: 12px; height: 12px; }
```
